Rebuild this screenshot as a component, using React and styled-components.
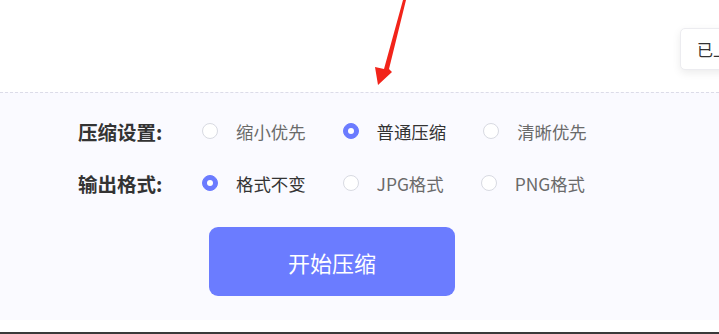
import React, { useState } from 'react'
import styled, { createGlobalStyle } from 'styled-components'

const GlobalStyle = createGlobalStyle`
    body {
        margin: 0;
        background: #ffffff;
        font-family: "Noto Sans CJK SC", "Noto Sans", sans-serif;
        overflow: hidden;
    }
`;

const Page = styled.div`
    width: 719px;
    height: 334px;
    display: flex;
    flex-direction: column;
    overflow: hidden;
`;

const TopBar = styled.div`
    position: relative;
    height: 92px;
    display: flex;
    justify-content: flex-end;
    align-items: flex-start;
`;

const UploadedButton = styled.button`
    margin-top: 28px;
    margin-right: -75px;
    height: 42px;
    padding: 0 16px;
    background: #ffffff;
    border: 1px solid #ececf0;
    border-radius: 5px;
    box-shadow: 0 3px 8px rgba(0, 0, 0, 0.08);
    font-family: inherit;
    font-size: 16px;
    color: #333333;
    white-space: nowrap;
`;

// red arrow from the annotation, lies over the page
const Arrow = styled.svg`
    position: absolute;
    left: 370px;
    top: 0;
`;

const Panel = styled.div`
    border-top: 1px dashed #dcdce8;
    background: #fafaff;
    height: 228px;
    box-sizing: border-box;
    padding: 24px 0 0 78px;
    display: flex;
    flex-direction: column;
`;

const Row = styled.div`
    display: flex;
    align-items: center;
    height: 28px;
    margin-bottom: ${props => props.$gap || 0}px;
`;

const Label = styled.span`
    width: 124px;
    font-size: 19.5px;
    font-weight: bold;
    color: #333333;
`;

const Option = styled.label`
    display: flex;
    align-items: center;
    margin-right: 37px;
    cursor: pointer;
`;

const Radio = styled.span`
    width: 16px;
    height: 16px;
    box-sizing: border-box;
    border-radius: 50%;
    border: 1px solid ${props => props.$checked ? '#6b7bff' : '#d8dae2'};
    background: ${props => props.$checked ? '#6b7bff' : '#ffffff'};
    display: flex;
    align-items: center;
    justify-content: center;
    margin-right: 18px;

    &::after {
        content: "";
        width: 6px;
        height: 6px;
        border-radius: 50%;
        background: #ffffff;
        display: ${props => props.$checked ? 'block' : 'none'};
    }
`;

const OptionText = styled.span`
    font-size: 17.4px;
    color: ${props => props.$checked ? '#333333' : '#6a6a6a'};
`;

const StartButton = styled.button`
    margin-left: 131px;
    width: 246px;
    height: 69px;
    border: none;
    border-radius: 9px;
    background: #6b7cff;
    color: #ffffff;
    font-family: inherit;
    font-size: 22px;
    cursor: pointer;
`;

const Spacer = styled.div`
    height: 12px;
    background: #ffffff;
`;

const BottomLine = styled.div`
    height: 2px;
    background: #3a3a3a;
`;

const qualityOptions = ['缩小优先', '普通压缩', '清晰优先'];
const formatOptions = ['格式不变', 'JPG格式', 'PNG格式'];

const RadioGroup = ({ options, value, onChange }) => (
    <>
        {options.map((opt) => (
            <Option key={opt} onClick={() => onChange(opt)}>
                <Radio $checked={value === opt} />
                <OptionText $checked={value === opt}>{opt}</OptionText>
            </Option>
        ))}
    </>
);

const App = () => {
    const [quality, setQuality] = useState('普通压缩');
    const [format, setFormat] = useState('格式不变');

    return (
        <Page>
            <GlobalStyle />
            <TopBar>
                <Arrow width="40" height="90" viewBox="0 0 40 90">
                    <polygon
                        points="33,0 36,0 19,69 22,72 8,85 5,67 14,69"
                        fill="#f2241a"
                    />
                </Arrow>
                <UploadedButton>已上传文件</UploadedButton>
            </TopBar>
            <Panel>
                <Row $gap={24}>
                    <Label>压缩设置:</Label>
                    <RadioGroup options={qualityOptions} value={quality} onChange={setQuality} />
                </Row>
                <Row $gap={30}>
                    <Label>输出格式:</Label>
                    <RadioGroup options={formatOptions} value={format} onChange={setFormat} />
                </Row>
                <StartButton>开始压缩</StartButton>
            </Panel>
            <Spacer />
            <BottomLine />
        </Page>
    );
};

export default App
